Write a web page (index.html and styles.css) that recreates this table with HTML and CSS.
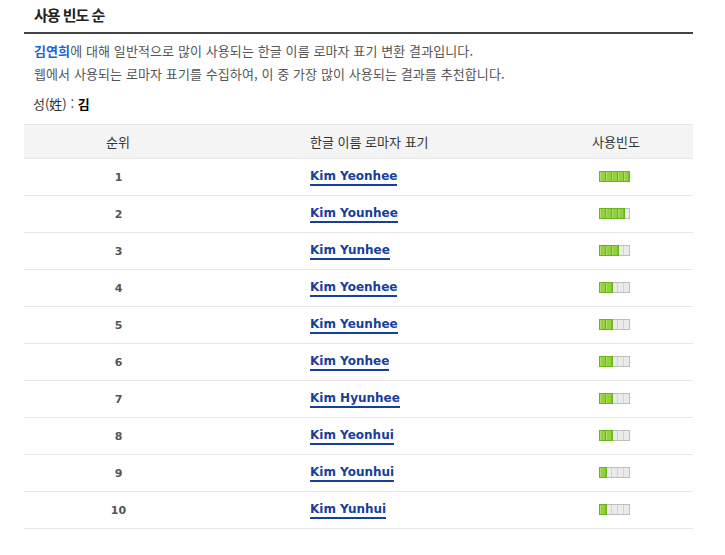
FILE: index.html
```html
<!DOCTYPE html>
<html lang="ko">
<head>
<meta charset="utf-8">
<link rel="stylesheet" href="styles.css">
</head>
<body>
<div class="wrap">
  <h2 class="title">사용 빈도 순</h2>
  <div class="desc">
    <p><strong class="name">김연희</strong>에 대해 일반적으로 많이 사용되는 한글 이름 로마자 표기 변환 결과입니다.</p>
    <p>웹에서 사용되는 로마자 표기를 수집하여, 이 중 가장 많이 사용되는 결과를 추천합니다.</p>
  </div>
  <p class="surname">성(姓) : <strong>김</strong></p>
  <div class="table">
    <div class="row head">
      <div class="c1">순위</div>
      <div class="c2">한글 이름 로마자 표기</div>
      <div class="c3">사용빈도</div>
    </div>
    <div class="row"><div class="c1 rank">1</div><div class="c2"><a href="#">Kim Yeonhee</a></div><div class="c3"><span class="bar"><i class="on"></i><i class="on"></i><i class="on"></i><i class="on"></i><i class="on"></i></span></div></div>
    <div class="row"><div class="c1 rank">2</div><div class="c2"><a href="#">Kim Younhee</a></div><div class="c3"><span class="bar"><i class="on"></i><i class="on"></i><i class="on"></i><i class="on"></i><i></i></span></div></div>
    <div class="row"><div class="c1 rank">3</div><div class="c2"><a href="#">Kim Yunhee</a></div><div class="c3"><span class="bar"><i class="on"></i><i class="on"></i><i class="on"></i><i></i><i></i></span></div></div>
    <div class="row"><div class="c1 rank">4</div><div class="c2"><a href="#">Kim Yoenhee</a></div><div class="c3"><span class="bar"><i class="on"></i><i class="on"></i><i></i><i></i><i></i></span></div></div>
    <div class="row"><div class="c1 rank">5</div><div class="c2"><a href="#">Kim Yeunhee</a></div><div class="c3"><span class="bar"><i class="on"></i><i class="on"></i><i></i><i></i><i></i></span></div></div>
    <div class="row"><div class="c1 rank">6</div><div class="c2"><a href="#">Kim Yonhee</a></div><div class="c3"><span class="bar"><i class="on"></i><i class="on"></i><i></i><i></i><i></i></span></div></div>
    <div class="row"><div class="c1 rank">7</div><div class="c2"><a href="#">Kim Hyunhee</a></div><div class="c3"><span class="bar"><i class="on"></i><i class="on"></i><i></i><i></i><i></i></span></div></div>
    <div class="row"><div class="c1 rank">8</div><div class="c2"><a href="#">Kim Yeonhui</a></div><div class="c3"><span class="bar"><i class="on"></i><i class="on"></i><i></i><i></i><i></i></span></div></div>
    <div class="row"><div class="c1 rank">9</div><div class="c2"><a href="#">Kim Younhui</a></div><div class="c3"><span class="bar"><i class="on"></i><i></i><i></i><i></i><i></i></span></div></div>
    <div class="row"><div class="c1 rank">10</div><div class="c2"><a href="#">Kim Yunhui</a></div><div class="c3"><span class="bar"><i class="on"></i><i></i><i></i><i></i><i></i></span></div></div>
  </div>
</div>
</body>
</html>
```
FILE: styles.css
```css
* { box-sizing: border-box; }
body {
  margin: 0;
  background: #fff;
  font-family: "Noto Sans CJK KR", "Noto Sans", sans-serif;
  color: #333;
}
.wrap {
  width: 669px;
  margin-left: 24px;
}
.title {
  margin: 0;
  height: 34px;
  padding: 3px 0 0 10px;
  font-size: 15px;
  line-height: 24px;
  font-weight: bold;
  letter-spacing: -1px;
  color: #222;
  border-bottom: 2px solid #444;
}
.desc {
  padding: 5px 0 0 10px;
}
.desc p {
  margin: 0;
  font-size: 13px;
  line-height: 23px;
  letter-spacing: 0.1px;
  color: #555;
}
.name {
  color: #1d63e0;
  font-weight: bold;
}
.surname {
  margin: 11px 0 0 9px;
  font-size: 13px;
  line-height: 16px;
  color: #333;
}
.surname strong { color: #000; }
.table {
  margin-top: 12px;
  border-top: 1px solid #e6e6e6;
}
.row {
  display: grid;
  grid-template-columns: 188px 327px 154px;
  height: 37px;
  align-items: center;
  border-bottom: 1px solid #e8e8e8;
  font-size: 12px;
  line-height: 16px;
}
.row.head {
  height: 34px;
  background: #f4f4f4;
  color: #333;
  font-size: 13px;
}
.c1 { text-align: center; }
.c2 { padding-left: 98px; }
.c3 { text-align: center; }
.row:not(.head) .c2,
.row:not(.head) .c3 { padding-bottom: 4px; }
.rank {
  font-family: "DejaVu Sans", sans-serif;
  font-weight: bold;
  font-size: 11px;
  color: #555;
  padding: 2px 0 0 1px;
}
.c2 a {
  font-family: "DejaVu Sans", sans-serif;
  font-weight: bold;
  font-size: 12px;
  color: #17409b;
  text-decoration: none;
  border-bottom: 2px solid #17409b;
  padding-bottom: 1px;
}
.bar {
  display: inline-flex;
  vertical-align: middle;
  height: 11px;
  width: 31px;
  margin-left: -4px;
  background: #ebebeb;
  border: 1px solid #bdbdbd;
}
.bar i {
  display: block;
  width: 6px;
  height: 9px;
  border-right: 1px solid #d2d2d2;
}
.bar i:last-child { width: 5px; border-right: 0; }
.bar i.on {
  background: #93d13d;
  border-right: 1px solid #7cbd2a;
  box-shadow: inset 1px 0 0 #aedd6c;
  outline: 1px solid #6ab420;
}
```
